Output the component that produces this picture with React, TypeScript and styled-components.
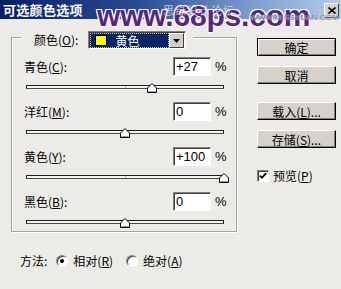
import React from 'react';
import styled, { createGlobalStyle } from 'styled-components';

const GlobalStyle = createGlobalStyle`
  html, body {
    margin: 0;
    padding: 0;
    background: #ecebe8;
  }
  body {
    font-family: "Noto Sans CJK SC", "Liberation Sans", sans-serif;
    font-size: 12px;
    color: #000;
  }
`;

const Window = styled.div`
  position: relative;
  width: 341px;
  height: 289px;
  background: #ecebe8;
  overflow: hidden;
`;

/* title bar */
const TitleBar = styled.div`
  height: 19px;
  display: flex;
  align-items: center;
  justify-content: space-between;
  padding: 0 2px 0 3px;
  background: linear-gradient(90deg, #0a1f64 0%, #2a4a92 40%, #7f9fd0 75%, #b4cbea 100%);
`;

const Title = styled.div`
  color: #fff;
  font-weight: 700;
  font-size: 13px;
  line-height: 19px;
  letter-spacing: 0.3px;
`;

const CloseButton = styled.div`
  width: 13px;
  height: 13px;
  display: flex;
  align-items: center;
  justify-content: center;
  background: #d4d0c8;
  border: 1px solid;
  border-color: #fff #404040 #404040 #fff;
  margin-top: 1px;
`;

/* watermark over the title bar */
const Watermark = styled.div`
  position: absolute;
  left: 97px;
  top: 3px;
  font-family: "Liberation Sans", Arial, sans-serif;
  font-weight: 700;
  font-size: 30px;
  line-height: 26px;
  letter-spacing: -0.2px;
  color: #55287c;
  text-shadow: 1px 0 0 #fff, -1px 0 0 #fff, 0 1px 0 #fff, 0 -1px 0 #fff,
    1px 1px 0 #f3d6f0, -1px -1px 0 #fff, 1px -1px 0 #fff, -1px 1px 0 #f3d6f0;
  white-space: nowrap;
`;

const WatermarkCn = styled.div`
  position: absolute;
  left: 163px;
  top: 4px;
  font-size: 11px;
  line-height: 13px;
  color: rgba(255, 255, 255, 0.7);
  letter-spacing: 1px;
  white-space: nowrap;
`;

const WatermarkSite = styled.div`
  position: absolute;
  left: 250px;
  top: 13px;
  font-family: "Liberation Sans", Arial, sans-serif;
  font-size: 8px;
  line-height: 9px;
  letter-spacing: 0.1px;
  color: #6f6f80;
  text-shadow: 0 0 1px #fff;
  white-space: nowrap;
`;

/* body */
const Body = styled.div`
  display: flex;
  padding-left: 11px;
`;

const LeftColumn = styled.div`
  width: 226px;
  display: flex;
  flex-direction: column;
`;

const Frame = styled.div`
  box-sizing: border-box;
  width: 226px;
  margin-top: 18px;
  padding: 0 12px 2px 12px;
  border: 1px solid #a3a3a0;
  box-shadow: inset 1px 1px 0 #fff, 1px 1px 0 #fff;
  display: flex;
  flex-direction: column;
`;

const FrameHeader = styled.div`
  align-self: flex-start;
  display: flex;
  align-items: center;
  gap: 10px;
  margin: -7px 0 0 -3px;
  padding: 0 7px 0 13px;
  background: #ecebe8;
`;

const Key = styled.span`
  text-decoration: underline;
`;

const Label = styled.span`
  white-space: nowrap;
  line-height: 14px;
`;

const Select = styled.div`
  box-sizing: border-box;
  width: 98px;
  height: 18px;
  display: flex;
  border: 1px solid;
  border-color: #808080 #fff #fff #808080;
  box-shadow: inset 1px 1px 0 #404040;
  padding: 1px 1px 0 1px;
  background: #fff;
`;

const SelectValue = styled.div`
  flex: 1;
  display: flex;
  align-items: center;
  gap: 8px;
  padding-left: 5px;
  background: #0a246a;
  outline: 1px dotted #c8c8a0;
  outline-offset: -1px;
  color: #fff;
  line-height: 14px;
`;

const Swatch = styled.span`
  width: 12px;
  height: 11px;
  background: #ffff00;
  border: 1px solid #000;
  box-sizing: border-box;
`;

const ArrowButton = styled.div`
  box-sizing: border-box;
  width: 15px;
  display: flex;
  align-items: center;
  justify-content: center;
  background: #d4d0c8;
  border: 1px solid;
  border-color: #fff #404040 #404040 #fff;
`;

const Channel = styled.div`
  margin-top: 8px;
`;

const ChannelHead = styled.div`
  display: flex;
  align-items: center;
  height: 19px;
`;

const ChannelLabel = styled(Label)`
  flex: 1;
`;

const ValueInput = styled.input`
  box-sizing: border-box;
  width: 38px;
  height: 19px;
  margin: 0;
  padding: 0 0 0 2px;
  border: 1px solid;
  border-color: #808080 #fff #fff #808080;
  box-shadow: inset 1px 1px 0 #404040;
  background: #fff;
  font-family: "Liberation Sans", Arial, sans-serif;
  font-size: 13px;
  color: #000;
  outline: none;
`;

const Percent = styled.span`
  width: 9px;
  margin-left: 4px;
  font-family: "Liberation Sans", Arial, sans-serif;
  font-size: 13px;
`;

const Slider = styled.div`
  position: relative;
  height: 14px;
  margin: 4px 0 0 2px;
  padding-top: 5px;
  box-sizing: border-box;
`;

const Track = styled.div`
  position: relative;
  height: 2px;
  border: 1px solid #1e1e1e;
  border-bottom-color: #4a4a4a;
  background: #f4f4f2;

  &::after {
    content: "";
    position: absolute;
    left: 50%;
    top: 0;
    width: 1px;
    height: 2px;
    background: #b0b0b0;
  }
`;

const Thumb = styled.svg`
  position: absolute;
  top: 3px;
  transform: translateX(-50%);
`;

const MethodRow = styled.div`
  display: flex;
  align-items: center;
  height: 14px;
  margin-top: 22px;
  padding-left: 9px;
`;

const RadioGroup = styled.div`
  display: flex;
  align-items: center;
  gap: 13px;
  margin-left: 9px;
`;

const RadioOption = styled.label`
  display: flex;
  align-items: center;
  gap: 5px;
`;

const RadioDot = styled.span<{ $checked?: boolean }>`
  box-sizing: border-box;
  width: 12px;
  height: 12px;
  border-radius: 50%;
  border: 1px solid;
  border-color: #808080 #fff #fff #808080;
  background: #fff;
  display: flex;
  align-items: center;
  justify-content: center;
  box-shadow: inset 1px 1px 0 #404040;

  &::after {
    content: "";
    width: 4px;
    height: 4px;
    border-radius: 50%;
    background: ${(p) => (p.$checked ? '#000' : 'transparent')};
  }
`;

const RightColumn = styled.div`
  width: 79px;
  margin-left: 20px;
  padding-top: 19px;
  display: flex;
  flex-direction: column;
`;

const ButtonStack = styled.div<{ $top?: number }>`
  display: flex;
  flex-direction: column;
  gap: 10px;
  margin-top: ${(p) => p.$top ?? 0}px;
`;

const Button = styled.div<{ $default?: boolean }>`
  box-sizing: border-box;
  width: 79px;
  height: 18px;
  display: flex;
  align-items: center;
  justify-content: center;
  background: #d6d2ca;
  border: 1px solid ${(p) => (p.$default ? '#000' : '#fff')};
  border-right-color: #000;
  border-bottom-color: #000;
  box-shadow: ${(p) =>
    p.$default
      ? 'inset 1px 1px 0 #fff, inset -1px -1px 0 #808080'
      : 'inset -1px -1px 0 #808080'};
  white-space: nowrap;
`;

const CheckRow = styled.label`
  display: flex;
  align-items: center;
  gap: 4px;
  margin-top: 21px;
`;

const CheckBox = styled.span`
  box-sizing: border-box;
  width: 12px;
  height: 12px;
  border: 1px solid;
  border-color: #808080 #fff #fff #808080;
  box-shadow: inset 1px 1px 0 #404040;
  background: #fff;
  display: flex;
  align-items: center;
  justify-content: center;
`;

type ChannelData = { name: string; key: string; value: string; pos: number };

const channels: ChannelData[] = [
  { name: '青色', key: 'C', value: '+27', pos: 0.635 },
  { name: '洋红', key: 'M', value: '0', pos: 0.5 },
  { name: '黄色', key: 'Y', value: '+100', pos: 1 },
  { name: '黑色', key: 'B', value: '0', pos: 0.5 },
];

const ThumbIcon = ({ pos }: { pos: number }) => (
  <Thumb width="10" height="10" viewBox="0 0 10 10" style={{ left: `${pos * 100}%` }}>
    <polygon points="5,0.5 9.5,5 9.5,9.5 0.5,9.5 0.5,5" fill="#fff" stroke="#000" strokeWidth="1" />
    <line x1="1.5" y1="8.5" x2="8.5" y2="8.5" stroke="#9a9a9a" />
  </Thumb>
);

export default function App() {
  return (
    <Window>
      <GlobalStyle />
      <TitleBar>
        <Title>可选颜色选项</Title>
        <CloseButton>
          <svg width="8" height="7" viewBox="0 0 8 7">
            <path d="M0.5 0.5 L7.5 6.5 M7.5 0.5 L0.5 6.5" stroke="#000" strokeWidth="1.6" />
          </svg>
        </CloseButton>
      </TitleBar>

      <Body>
        <LeftColumn>
          <Frame>
            <FrameHeader>
              <Label>
                颜色(<Key>O</Key>):
              </Label>
              <Select>
                <SelectValue>
                  <Swatch />
                  <span>黄色</span>
                </SelectValue>
                <ArrowButton>
                  <svg width="7" height="4" viewBox="0 0 7 4">
                    <polygon points="0,0 7,0 3.5,4" fill="#000" />
                  </svg>
                </ArrowButton>
              </Select>
            </FrameHeader>

            {channels.map((c) => (
              <Channel key={c.key}>
                <ChannelHead>
                  <ChannelLabel>
                    {c.name}(<Key>{c.key}</Key>):
                  </ChannelLabel>
                  <ValueInput readOnly value={c.value} />
                  <Percent>%</Percent>
                </ChannelHead>
                <Slider>
                  <Track />
                  <ThumbIcon pos={c.pos} />
                </Slider>
              </Channel>
            ))}
          </Frame>

          <MethodRow>
            <Label>方法:</Label>
            <RadioGroup>
              <RadioOption>
                <RadioDot $checked />
                <Label>
                  相对(<Key>R</Key>)
                </Label>
              </RadioOption>
              <RadioOption>
                <RadioDot />
                <Label>
                  绝对(<Key>A</Key>)
                </Label>
              </RadioOption>
            </RadioGroup>
          </MethodRow>
        </LeftColumn>

        <RightColumn>
          <ButtonStack>
            <Button $default>确定</Button>
            <Button>取消</Button>
          </ButtonStack>
          <ButtonStack $top={18}>
            <Button>
              载入(<Key>L</Key>)...
            </Button>
            <Button>
              存储(<Key>S</Key>)...
            </Button>
          </ButtonStack>
          <CheckRow>
            <CheckBox>
              <svg width="8" height="8" viewBox="0 0 8 8">
                <path d="M0.8 3.6 L3 5.8 L7.2 1.2" fill="none" stroke="#000" strokeWidth="1.8" />
              </svg>
            </CheckBox>
            <Label>
              预览(<Key>P</Key>)
            </Label>
          </CheckRow>
        </RightColumn>
      </Body>

      <Watermark>www.68ps.com</Watermark>
      <WatermarkCn>思缘设计论坛</WatermarkCn>
      <WatermarkSite>WWW.MISSYUAN.COM</WatermarkSite>
    </Window>
  );
}
